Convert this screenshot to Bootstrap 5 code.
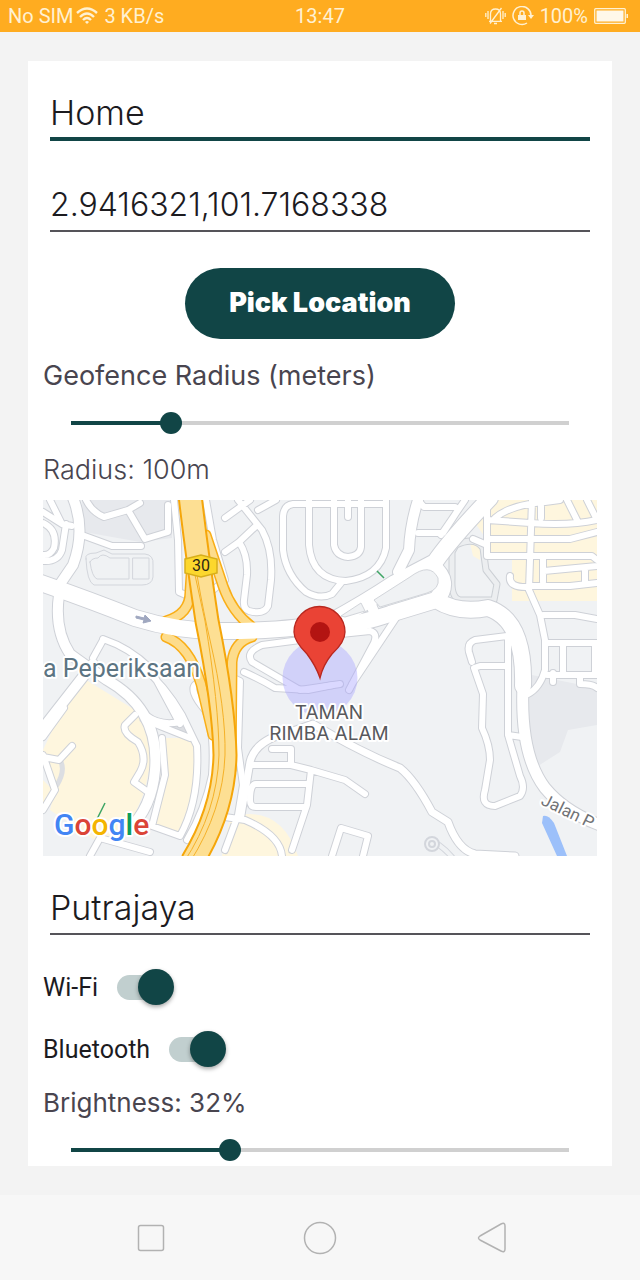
<!DOCTYPE html>
<html lang="en">
<head>
<meta charset="utf-8">
<meta name="viewport" content="width=device-width, initial-scale=1">
<title>Edit place</title>
<link href="https://cdn.jsdelivr.net/npm/bootstrap@5.3.0/dist/css/bootstrap.min.css" rel="stylesheet">
<style>
  :root { --brand: #114546; }
  body { background: #f3f3f3; font-family: Inter, "Liberation Sans", sans-serif; color: #1c1b1f; }
  .status { background: #ffac20; color: #fff1d2; height: 32px; font: 400 20px/32px Roboto, sans-serif; }
  .status-side { flex: 1 1 0; }
  .status-icons { gap: 6px; }
  .wifi-icon { margin: 0 6px 0 3px; }
  .sheet { background: #fff; margin: 29px 28px; padding: 24px 15px 5px; }
  .line-block { margin: 0 7px; }
  .line-input { font-size: 34px; font-weight: 300; line-height: 40px; color: #1c1b1f; background: transparent; border: 0; border-bottom: 2px solid #555459; border-radius: 0; padding: 6px 0 4px 0; height: 56px; }
  .line-input.active-line { border-bottom: 4px solid var(--brand); }
  .line-input:focus { box-shadow: none; border-color: var(--brand); background: transparent; }
  .line-input.digits { font-size: 32px; margin-top: 35px; }
  .pick-row { margin-top: 36px; }
  .pick { background: var(--brand); color: #fff; width: 270px; height: 71px; border-radius: 36px; font-size: 27px; font-weight: 900; line-height: 32px; padding: 0 0 2px; }
  .pick:hover { background: #1b5a5b; color: #fff; }
  .field-text { font-size: 27px; line-height: 32px; color: #49454f; margin-top: 21px; }
  .field-light { font-weight: 300; margin-top: 20px; }
  .field-small { font-size: 26px; }
  .slider { display: block; appearance: none; background: transparent; width: calc(100% - 34px); height: 22px; margin: 20px 17px 0; }
  .slider::-webkit-slider-runnable-track {
    height: 4px;
    background: linear-gradient(var(--brand), var(--brand)) 11px 0 / calc((100% - 22px) * var(--part)) 100% no-repeat,
                linear-gradient(#d0d0d0, #d0d0d0) 11px 0 / calc(100% - 22px) 100% no-repeat;
  }
  .slider::-webkit-slider-thumb { appearance: none; width: 22px; height: 22px; margin-top: -9px; border-radius: 50%; background: var(--brand); }
  .map { display: block; width: 100%; height: auto; margin-top: 14px; }
  .map text { font-family: Roboto, sans-serif; paint-order: stroke; stroke: #fff; stroke-linejoin: round; }
  .map .district { font-family: Inter, sans-serif; font-size: 19px; fill: #58595d; text-anchor: middle; }
  .city { margin-top: 23px; }
  .toggles { margin-top: 35px; display: grid; gap: 28px; }
  .toggle-row { gap: 19px; }
  .toggle-label { font: 400 25px/32px Roboto, sans-serif; color: #1c1b1f; padding-top: 2px; }
  .toggle { appearance: none; position: relative; width: 56px; height: 25px; border-radius: 13px; background: #c1cfcf; margin: 0; }
  .toggle::before { content: ""; position: absolute; right: -1px; top: -6px; width: 36px; height: 36px; border-radius: 50%; background: var(--brand); box-shadow: 0 2px 4px rgba(0,0,0,.35); }
  .toggle:not(:checked)::before { right: auto; left: -1px; background: #fafafa; }
  .softkeys { background: #f7f7f7; height: 85px; padding: 0 66px; }
  .softkeys button { flex: 1 1 0; }
</style>
</head>
<body>
<div class="d-flex flex-column min-vh-100">
  <header class="status d-flex px-2">
    <div class="status-side d-flex align-items-center">
      <span>No SIM</span>
      <svg class="wifi-icon" width="22" height="18" viewBox="0 0 22 18" fill="none" stroke="#fff1d2" stroke-width="2.400" aria-hidden="true"><path d="M1 6Q11-3 21 6M4 10Q11 3 18 10M7 13Q11 9 15 13"/><path d="M9 15Q11 13 13 15L11 17Z" fill="#fff1d2" stroke="none"/></svg>
      <span>3 KB/s</span>
    </div>
    <span>13:47</span>
    <div class="status-side status-icons d-flex align-items-center justify-content-end">
      <svg width="21" height="18" viewBox="0 0 21 18" fill="none" stroke="#fff1d2" stroke-width="1.300" aria-hidden="true"><path d="M5.500 14V7Q5.500 2 10.500 2Q15.500 2 15.500 7V14M4 14.300H17M9 16.500H12M16.500 1L5 16.500M3 4V12M18 4V12M.8 6V10M20.200 6V10"/></svg>
      <svg width="22" height="20" viewBox="0 0 22 20" fill="none" stroke="#fff1d2" stroke-width="1.500" aria-hidden="true"><path d="M15 17A9 9 0 1 1 19 10"/><path d="M16 9H22L19 13Z" fill="#fff1d2" stroke="none"/><path d="M6 9H14V14H6Z" fill="#fff1d2" stroke="none"/><path d="M8 9V7Q8 5 10 5Q12 5 12 7V9"/></svg>
      <span>100%</span>
      <svg class="me-1" width="34" height="16" viewBox="0 0 34 16" aria-hidden="true"><rect x=".7" y=".7" width="30.600" height="14.600" rx="1" fill="none" stroke="#fff1d2" stroke-width="1.300"/><path d="M2.500 2.500H29.500V13.500H2.500Z" fill="#fff8ea"/><path d="M32.500 6H34V10H32.500Z" fill="#fff1d2"/></svg>
    </div>
  </header>

  <main class="sheet">
    <div class="line-block">
      <input class="form-control line-input active-line" type="text" value="Home" aria-label="Place name">
      <input class="form-control line-input digits" type="text" value="2.9416321,101.7168338" aria-label="Coordinates">
    </div>
    <div class="text-center pick-row"><button class="btn pick border-0" type="button">Pick Location</button></div>

    <label class="field-text d-block" for="radius">Geofence Radius (meters)</label>
    <input class="slider" id="radius" type="range" min="0" max="500" value="100" style="--part:.2">
    <div class="field-text field-light">Radius: 100m</div>

    <svg class="map" viewBox="43 500 554 356" role="img" aria-label="Map of Taman Rimba Alam">
      <defs>
        <!-- narrow residential streets -->
        <g id="lanes">
          <path d="M43 512L62 524L72 526M50 500L62 524M43 523Q58 530 54 548Q50 556 43 555M66 524L62 550Q58 562 43 561"/>
          <path d="M82 535L112 546H141M86 500Q92 512 104 517L128 510L140 503M128 510L145 539L168 532V505"/>
          <path d="M225 518L250 500M238 500L262 530Q273 550 271 580L268 606Q264 615 249 611Q243 609 244 600L247 575Q248 555 239 542L225 552M239 542L256 526M258 510L276 500"/>
          <path d="M370 504H293Q284 505 283 516V550Q286 575 306 592Q320 600 332 594L341 583M309 500V545Q312 580 346 581Q380 577 386 548V500M334 500V545Q336 556 348 557Q360 556 361 547V500M348 500V517M370 504H386"/>
          <path d="M341 634L370 631Q378 633 374 643L349 690M300 640L262 645Q245 652 252 662L300 690L340 684M352 684L396 618"/>
          <path d="M418 500L424 507H455M458 510L443 533H418M465 500L441 535"/>
          <path d="M473 539L487 545V556H592L597 560M487 500V545M532 500L529 590M541 500V518M487 520L530 523Q570 526 597 520M487 539H570L597 532M495 518Q510 505 545 502L560 500M567 500L577 520M587 500L597 520M543 558V582M544 571L597 566M529 586H570L597 583M585 568V584M529 587Q508 588 510 576M529 590L540 615L545 640V670Q540 688 528 694M543 615H575L597 619M545 643H597M563 643V673M595 643V673M547 675H597M553 673V682M580 676V684Q593 684 597 688"/>
          <path d="M507 636L475 640Q467 643 469 652L472 662M508 640V735L520 776Q526 788 520 796L495 806Q480 806 485 790L490 760Q490 745 482 728L483 694L474 668L480 666H506M508 735L522 737"/>
          <path d="M244 672Q262 680 275 688L308 690L333 685M225 674L240 681L238 748L243 785L238 815L225 850M272 749H291V764M250 765H291L311 770L345 780L365 794M311 770L307 805L292 850M308 784H256Q250 784 250 800Q250 807 256 807H304M225 817L245 820Q280 835 282 856M332 856L341 828L368 836L363 856"/>
          <path d="M43 755L55 790L43 810M43 737L64 708M43 757L59 760L72 746M103 640L93 658M103 639Q130 648 150 668L180 724M150 722L190 738M135 715L125 725Q122 733 138 742Q148 758 140 772L134 782L148 792M162 738L165 775L152 826L180 836Q200 800 197 746L182 715Q165 685 140 665M180 722Q160 726 147 716M196 684Q188 690 205 710Q215 730 212 775Q205 810 187 840"/>
          <path d="M90 856L100 838L150 852"/>
        </g>
        <g id="mains">
          <path d="M73 498Q86 530 73 565L56 590M59 595Q54 630 70 654Q82 663 107 680Q160 710 155 770Q152 808 128 830"/>
          <path d="M93 664L43 728"/>
          <path d="M418 500Q410 525 409 550L398 572M369 600L374 612"/>
        </g>
        <g id="locals">
          <path d="M241 815L250 762Q255 740 290 732L313 724Q360 752 400 768Q415 780 432 812L448 822Q458 850 475 854L515 856"/>
        </g>
        <g id="avenues">
          <path d="M38 582Q90 600 135 618Q180 632 225 631Q290 631 330 622Q365 603 395 583L435 562Q450 540 490 498"/>
          <path d="M432 566Q452 582 436 600L390 614Q360 624 330 628M436 600Q458 614 488 608Q525 620 523 686"/>
        </g>
        <path id="jalan" d="M523 660V686Q520 755 545 788Q565 812 600 825"/>
        <g id="ramps">
          <path d="M166 621Q190 614 190 592L192 560M206 535L223 586Q232 612 252 627M166 637Q189 645 201 684L213 735M252 637Q234 642 232 662L231 770"/>
        </g>
        <path id="frontage" d="M174 500L178 540L179 592L195 599M206 500L213 540L225 580L213 590"/>
      </defs>
      <rect x="43" y="500" width="554" height="356" fill="#f0f2f4"/>
      <path d="M82 500H172V538L140 542L84 532ZM532 675L597 688V725L568 730L560 752L538 766L524 735Z" fill="#e7e9ed"/>
      <path d="M487 500H597V601H512V556H487ZM473 520L487 505V540ZM470 543L480 548V560L473 556ZM78 675L135 710L155 740L145 790L125 838L95 840L50 810L55 790L43 750ZM165 738H192Q201 780 182 836L155 825ZM230 817Q280 803 298 856H222ZM43 780L53 790L43 803Z" fill="#fef6de"/>
      <g fill="none" stroke-linejoin="round" stroke-linecap="round">
        <path d="M86 559Q84 553 96 553L104 550L112 554H145Q154 555 153 565V577Q152 585 142 585H94Q87 582 86 559ZM90 562Q92 558 98 558Q102 552 110 558H129V579H97Q92 577 90 562ZM133 558H149V579H133Z" stroke="#d3d6dc"/>
        <path d="M452 552L456 545Q475 536 483 548L486 570L497 584L494 600H460Q451 598 452 578Z" stroke="#ccd0d5" stroke-width="7"/>
        <path d="M452 552L456 545Q475 536 483 548L486 570L497 584L494 600H460Q451 598 452 578Z" stroke="#eceef0" stroke-width="5"/>
        <path d="M60 760Q66 770 57 785M142 720Q165 728 188 730" stroke="#dcdee2" stroke-width="5"/>
        <path d="M439 845Q446 850 452 857" stroke="#d3d6dc" stroke-width="6"/><path d="M439 845Q446 850 452 857" stroke="#f0f2f4" stroke-width="4"/>
        <circle cx="432" cy="844" r="7" fill="#f0f2f4" stroke="#d3d6dc" stroke-width="2"/><circle cx="432" cy="844" r="3" stroke="#d3d6dc" stroke-width="2"/>
        <g stroke="#ced1d7">
          <use href="#lanes" stroke-width="8"/><use href="#frontage" stroke-width="8"/><use href="#locals" stroke-width="9"/><use href="#mains" stroke-width="12"/><use href="#jalan" stroke-width="13"/><use href="#avenues" stroke-width="18"/>
        </g>
        <g stroke="#fff"><use href="#lanes" stroke-width="6"/><use href="#frontage" stroke-width="6"/><use href="#locals" stroke-width="7"/><use href="#mains" stroke-width="10"/><use href="#jalan" stroke-width="11"/></g>
        <use href="#ramps" stroke="#f9ae17" stroke-width="11"/>
        <use href="#ramps" stroke="#fddc8c" stroke-width="8"/>
        <use href="#avenues" stroke="#fff" stroke-width="16"/>
        <g stroke-linecap="butt">
          <path d="M190 495Q197 555 207 621Q224 705 225 755Q224 810 192 862" stroke="#f5a60a" stroke-width="25"/>
          <path d="M190 495Q197 555 207 621Q224 705 225 755Q224 810 192 862" stroke="#fddf93" stroke-width="21"/>
          <path d="M197 575Q204 615 210 640Q226 710 225 755Q223 810 190 862M195 575L205 621Q219 705 219 755Q217 812 184 862" stroke="#f5b128" stroke-width="1"/>
        </g>
      </g>
      <path d="M341 616L361 603L365 611L345 617ZM374 600L410 577Q430 562 438 578Q440 589 427 593L380 607Z" fill="#f0f2f4" stroke="#d2d5da"/>
      <path d="M377 571L384 578M105 803L97 819L87 828" fill="none" stroke="#3fa565" stroke-width="1.500"/>
      <path d="M136 616L144 618L145 615L151 621L143 623L144 620L136 618Z" fill="#a0a8c0" stroke="#a0a8c0"/>
      <path d="M543 816Q548 814 554 823L567 856H557L542 823Z" fill="#9cc0fa"/>
      <path d="M185 559L201 555L217 559V573L201 577L185 573Z" fill="#fcd72d" stroke="#d7ae1b" stroke-width="1.500"/>
      <text x="201" y="571" font-size="16" text-anchor="middle" fill="#2b2714" style="stroke:none">30</text>
      <circle cx="320" cy="678" r="37.500" fill="#a9a5ff" fill-opacity=".43"/>
      <g stroke-width="4">
        <text x="43" y="677" font-size="25" fill="#5c7482">a Peperiksaan</text>
        <text class="district" x="329" y="719">TAMAN</text>
        <text class="district" x="329" y="740">RIMBA ALAM</text>
        <text transform="translate(540 804) rotate(26)" font-size="17" fill="#717376">Jalan P</text>
        <text x="54" y="835" font-size="30" font-weight="500"><tspan fill="#4285f4">G</tspan><tspan fill="#db4437">o</tspan><tspan fill="#f4b400">o</tspan><tspan fill="#4285f4">g</tspan><tspan fill="#0f9d58">l</tspan><tspan fill="#db4437">e</tspan></text>
      </g>
      <path d="M320 678Q316 666 307 654Q294 641 294 632A25.500 25.500 0 0 1 345 632Q345 642 332 654Q323 665 320 678Z" fill="#ea4335" stroke="#b8281f" stroke-width="1.300"/>
      <circle cx="320" cy="632" r="10" fill="#b31412"/>
    </svg>

    <div class="line-block city"><input class="form-control line-input" type="text" value="Putrajaya" aria-label="City"></div>
    <div class="toggles">
      <div class="d-flex align-items-center toggle-row"><label class="toggle-label" for="wifi">Wi-Fi</label><input class="toggle" id="wifi" type="checkbox" role="switch" checked></div>
      <div class="d-flex align-items-center toggle-row"><label class="toggle-label" for="bt">Bluetooth</label><input class="toggle" id="bt" type="checkbox" role="switch" checked></div>
    </div>
    <label class="field-text field-small d-block" for="bright">Brightness: 32%</label>
    <input class="slider" id="bright" type="range" min="0" max="100" value="32" style="--part:.32">
  </main>

  <nav class="softkeys d-flex align-items-center mt-auto" aria-label="System keys">
    <button class="btn border-0 p-0" type="button" aria-label="Recent apps"><svg width="34" height="34" viewBox="0 0 34 34" fill="none" stroke="#b2b2b2" stroke-width="1.500"><rect x="4.500" y="4.500" width="25" height="25" rx="2"/></svg></button>
    <button class="btn border-0 p-0" type="button" aria-label="Home"><svg width="34" height="34" viewBox="0 0 34 34" fill="none" stroke="#b2b2b2" stroke-width="1.500"><circle cx="17" cy="17" r="15.500"/></svg></button>
    <button class="btn border-0 p-0" type="button" aria-label="Back"><svg width="34" height="34" viewBox="0 0 34 34" fill="none" stroke="#b2b2b2" stroke-width="1.500"><path d="M8 15L29 3Q33 1 33 5V28Q33 32 29 30L8 19Q5 17 8 15Z"/></svg></button>
  </nav>
</div>
<script src="https://cdn.jsdelivr.net/npm/bootstrap@5.3.0/dist/js/bootstrap.bundle.min.js"></script>
</body>
</html>
